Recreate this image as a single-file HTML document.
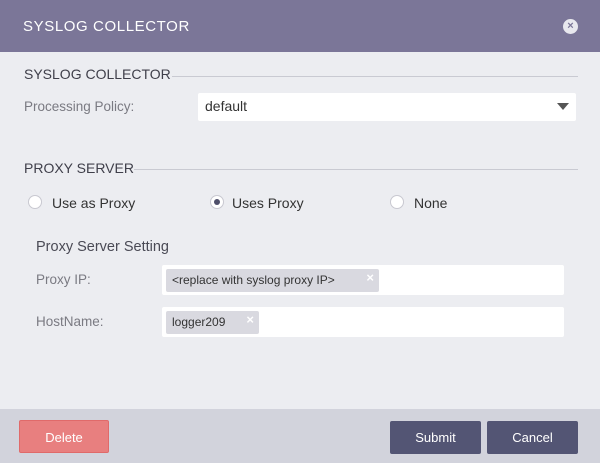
<!DOCTYPE html>
<html><head><style>
*{margin:0;padding:0;box-sizing:border-box}
body{width:600px;height:463px;background:#ecedf1;font-family:"Liberation Sans",sans-serif;position:relative;overflow:hidden}
.a{position:absolute}
.hdr{left:0;top:0;width:600px;height:52px;background:#7b7698}
.sec{font-size:14px;color:#3f3f4a;white-space:nowrap}
.line{height:1px;background:#c9cad2}
.lbl{font-size:13.5px;color:#7a7a82}
.box{background:#fff;border-radius:2px}
.chip{background:#d9d9e0;border-radius:2px;font-size:12px;color:#333;padding:0 6px;line-height:23px}
.x{position:absolute;right:5px;top:-5px;color:#fff;font-size:13px;font-weight:bold;line-height:14px}
.radio{width:14px;height:14px;border-radius:50%;background:#fff;border:1px solid #c8c8d0}
.rt{font-size:14px;color:#333}
.btn{height:33px;border-radius:2px;color:#fff;font-size:13px;text-align:center;line-height:33px}
</style></head><body>
<div class="a hdr"></div>
<div class="a" style="left:23px;top:18px;color:#fff;font-size:15px;letter-spacing:0.6px">SYSLOG COLLECTOR</div>
<div class="a" style="left:563px;top:19px;width:15px;height:15px;border-radius:50%;background:#e8e8ee;color:#7b7698;font-size:11px;font-weight:bold;text-align:center;line-height:15px">×</div>

<div class="a sec" style="left:24px;top:66px">SYSLOG COLLECTOR</div>
<div class="a line" style="left:172px;top:76px;width:406px"></div>
<div class="a lbl" style="left:24px;top:99px">Processing Policy:</div>
<div class="a box" style="left:198px;top:93px;width:378px;height:28px"></div>
<div class="a" style="left:205px;top:98px;font-size:14px;color:#333">default</div>
<div class="a" style="left:557px;top:103px;width:0;height:0;border-left:6px solid transparent;border-right:6px solid transparent;border-top:7px solid #555"></div>

<div class="a sec" style="left:24px;top:160px">PROXY SERVER</div>
<div class="a line" style="left:134px;top:169px;width:444px"></div>

<div class="a radio" style="left:28px;top:195px"></div>
<div class="a rt" style="left:52px;top:195px">Use as Proxy</div>
<div class="a radio" style="left:210px;top:195px"><div style="width:6px;height:6px;border-radius:50%;background:#4e4f6a;margin:3px"></div></div>
<div class="a rt" style="left:232px;top:195px">Uses Proxy</div>
<div class="a radio" style="left:390px;top:195px"></div>
<div class="a rt" style="left:414px;top:195px">None</div>

<div class="a" style="left:36px;top:239px;font-size:14.5px;color:#4a4a55">Proxy Server Setting</div>
<div class="a lbl" style="left:36px;top:272px">Proxy IP:</div>
<div class="a box" style="left:162px;top:265px;width:402px;height:30px"></div>
<div class="a chip" style="left:166px;top:269px;width:213px">&lt;replace with syslog proxy IP&gt;<span class="x" style="top:2px">×</span></div>
<div class="a lbl" style="left:36px;top:314px">HostName:</div>
<div class="a box" style="left:162px;top:307px;width:402px;height:30px"></div>
<div class="a chip" style="left:166px;top:311px;width:93px">logger209<span class="x" style="top:2px">×</span></div>

<div class="a" style="left:0;top:409px;width:600px;height:54px;background:#d2d3dc"></div>
<div class="a btn" style="left:19px;top:420px;width:90px;background:#e87f7f;border:1px solid #e06a6a">Delete</div>
<div class="a btn" style="left:390px;top:421px;width:91px;background:#535574">Submit</div>
<div class="a btn" style="left:487px;top:421px;width:91px;background:#535574">Cancel</div>
</body></html>
